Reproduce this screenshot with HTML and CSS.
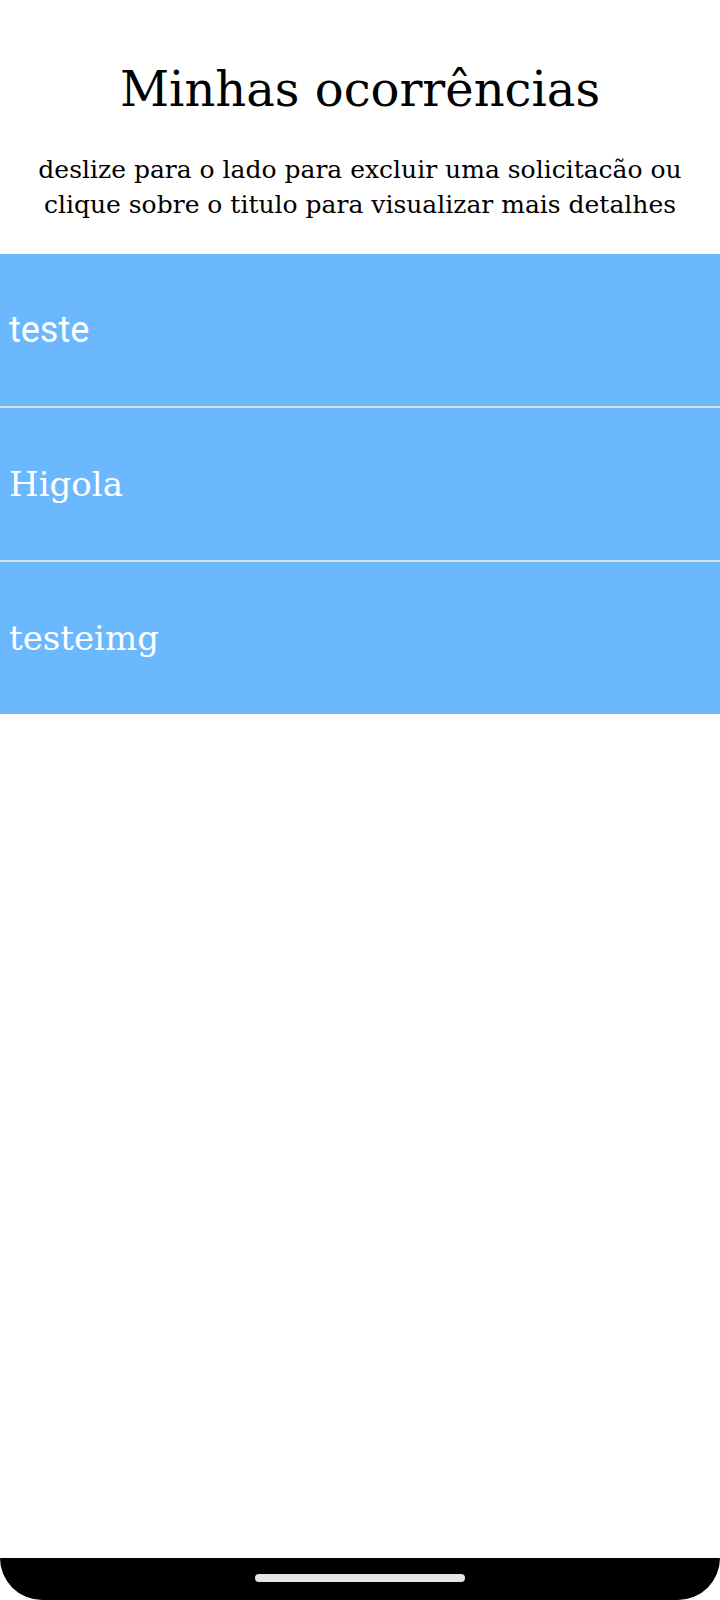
FILE: index.html
```html
<!DOCTYPE html>
<html lang="pt">
<head>
<meta charset="utf-8">
<title>Minhas ocorrências</title>
<link rel="stylesheet" href="styles.css">
</head>
<body>
<div class="screen">
  <header class="header">
    <h1 class="title">Minhas ocorrências</h1>
    <p class="subtitle">deslize para o lado para excluir uma solicitacão ou clique sobre o titulo para visualizar mais detalhes</p>
  </header>
  <ul class="list">
    <li class="row"><span class="row-text sans">teste</span></li>
    <li class="row"><span class="row-text">Higola</span></li>
    <li class="row"><span class="row-text">testeimg</span></li>
  </ul>
  <div class="navbar"><div class="home-indicator"></div></div>
</div>
</body>
</html>
```

FILE: styles.css
```css
html, body {
  margin: 0;
  padding: 0;
  background: #ffffff;
}
.screen {
  width: 720px;
  min-height: 1600px;
  display: flex;
  flex-direction: column;
  font-family: "DejaVu Serif", "Liberation Serif", serif;
  color: #000;
}
.header {
  display: flex;
  flex-direction: column;
  align-items: center;
  padding-top: 61px;
  height: 254px;
  box-sizing: border-box;
}
.title {
  margin: 0;
  font-weight: normal;
  font-size: 48px;
  line-height: 56px;
  white-space: nowrap;
}
.subtitle {
  margin: 35px 0 0;
  width: 710px;
  text-align: center;
  font-size: 25px;
  line-height: 35px;
}
.list {
  list-style: none;
  margin: 0;
  padding: 0;
}
.row {
  height: 152px;
  background: #6cb8fe;
  display: flex;
  align-items: center;
  padding-left: 9px;
  border-bottom: 2px solid #d6e2ee;
}
.row:last-child {
  border-bottom: none;
}
.row-text {
  color: #ffffff;
  font-size: 34px;
}
.sans {
  font-family: Roboto, "Noto Sans", sans-serif;
  font-size: 36px;
}
.navbar {
  margin-top: auto;
  height: 42px;
  background: #000;
  border-radius: 0 0 46px 46px;
  display: flex;
  justify-content: center;
  padding-top: 16px;
  box-sizing: border-box;
}
.home-indicator {
  width: 210px;
  height: 8px;
  border-radius: 4px;
  background: #e6e6e6;
}
```
